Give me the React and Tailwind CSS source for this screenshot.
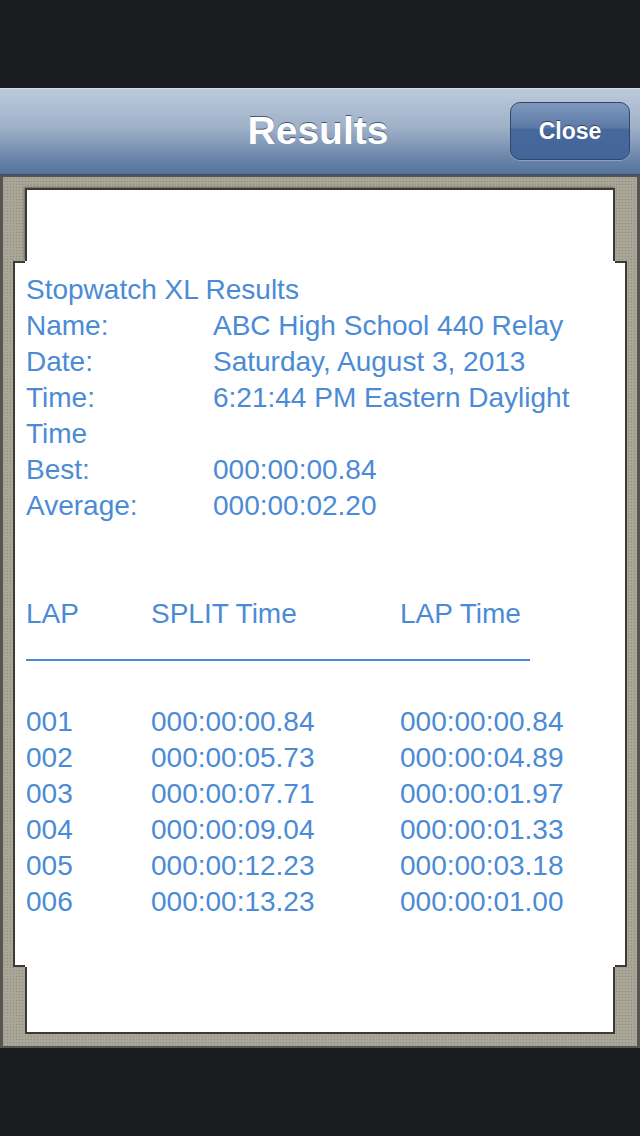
/**
 * Results screen — Stopwatch XL lap report shown in a framed white sheet.
 */
const info = [
  ['Name:', 'ABC High School 440 Relay'],
  ['Date:', 'Saturday, August 3, 2013'],
  ['Time:', '6:21:44 PM Eastern Daylight'],
]

const stats = [
  ['Best:', '000:00:00.84'],
  ['Average:', '000:00:02.20'],
]

const laps = [
  ['001', '000:00:00.84', '000:00:00.84'],
  ['002', '000:00:05.73', '000:00:04.89'],
  ['003', '000:00:07.71', '000:00:01.97'],
  ['004', '000:00:09.04', '000:00:01.33'],
  ['005', '000:00:12.23', '000:00:03.18'],
  ['006', '000:00:13.23', '000:00:01.00'],
]

function LapRow({ cells }) {
  return (
    <div className="flex h-[36px] items-center">
      <span className="w-[125px]">{cells[0]}</span>
      <span className="w-[249px]">{cells[1]}</span>
      <span>{cells[2]}</span>
    </div>
  )
}

export default function App() {
  return (
    <div className="flex h-[1136px] w-[640px] flex-col bg-[#1b1c1f] font-['Liberation_Sans',Arial,sans-serif]">
      <div className="h-[88px]" />

      {/* Nav bar */}
      <div className="relative flex h-[87px] items-center justify-center border-t border-[#d7dee8] border-b border-b-[#34507a] bg-[linear-gradient(to_bottom,#bccadb,#9fb1c8_45%,#6d87ab_80%,#54739e)]">
        <h1 className="ml-[-4px] text-[39px] font-bold text-white [text-shadow:0_-1px_0_#42597a]">Results</h1>
        <button className="absolute right-[10px] top-[13px] flex h-[58px] w-[120px] items-center justify-center rounded-[10px] border border-[#2e4870] bg-[linear-gradient(to_bottom,#7f98bc,#5b79a6_45%,#46689b_46%,#43659a)] text-[23px] font-bold text-white shadow-[0_1px_0_rgba(255,255,255,0.25)] [text-shadow:0_-1px_0_#2d4468]">
          Close
        </button>
      </div>

      {/* Frame */}
      <div className="flex h-[873px] flex-col border-x-[3px] border-t-[2px] border-b-[2px] border-[#57554f] bg-[#a9a597] bg-[radial-gradient(#8e8a7e_1px,transparent_1px)] bg-[length:3px_3px] px-[10px] py-[11px]">
        <div className="mx-[12px] h-[73px] border-[2px] border-b-0 border-[#3b3a37] bg-white shadow-[-1px_-1px_2px_rgba(0,0,0,0.35)]" />

        <div className="flex h-[706px]">
          <div className="w-[12px] border-y-[2px] border-l-[2px] border-[#3b3a37] bg-white" />
          <div className="flex-1 bg-white pl-[1px] pt-[11px] text-[28px] leading-[36px] text-[#4b8bd6]">
            <div>Stopwatch XL Results</div>
            {info.map(([k, v]) => (
              <div key={k} className="flex">
                <span className="w-[187px] shrink-0">{k}</span>
                <span className="whitespace-nowrap">{v}</span>
              </div>
            ))}
            <div>Time</div>
            {stats.map(([k, v]) => (
              <div key={k} className="flex">
                <span className="w-[187px] shrink-0">{k}</span>
                <span>{v}</span>
              </div>
            ))}
            <div className="h-[72px]" />
            <LapRow cells={['LAP', 'SPLIT Time', 'LAP Time']} />
            <div className="flex h-[36px] items-end pb-[7px]">
              <div className="h-[2px] w-[504px] bg-[#4b8bd6]" />
            </div>
            <div className="h-[36px]" />
            {laps.map(l => (
              <LapRow key={l[0]} cells={l} />
            ))}
          </div>
          <div className="w-[12px] border-y-[2px] border-r-[2px] border-[#3b3a37] bg-white" />
        </div>

        <div className="mx-[12px] h-[67px] border-[2px] border-t-0 border-[#3b3a37] bg-white" />
      </div>

      <div className="flex-1" />
    </div>
  )
}
